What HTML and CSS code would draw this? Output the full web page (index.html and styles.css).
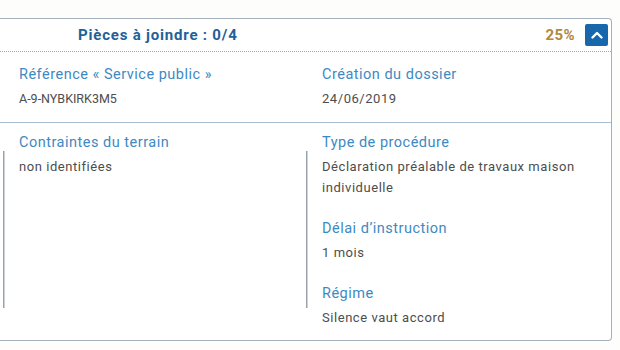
FILE: index.html
```html
<!DOCTYPE html>
<html lang="fr">
<head>
  <meta charset="UTF-8" />
  <title>Dossier</title>
  <link rel="stylesheet" href="styles.css">
</head>
<body>
  <div class="card">
    <div class="card-header">
      <span class="pieces">Pièces à joindre : 0/4</span>
      <span class="percent">25%</span>
      <button class="toggle-btn" title="Replier">
        <svg width="12" height="8" viewBox="0 0 12 8"><path d="M1.5 6.5 L6 2 L10.5 6.5" fill="none" stroke="#fff" stroke-width="2.4" stroke-linecap="round" stroke-linejoin="round"/></svg>
      </button>
    </div>

    <div class="row row-top">
      <div class="col">
        <div class="label">Référence « Service public »</div>
        <div class="value code">A-9-NYBKIRK3M5</div>
      </div>
      <div class="col">
        <div class="label">Création du dossier</div>
        <div class="value">24/06/2019</div>
      </div>
    </div>

    <div class="row row-bottom">
      <div class="col col-lined">
        <div class="label">Contraintes du terrain</div>
        <div class="value">non identifiées</div>
      </div>
      <div class="col col-lined">
        <div class="label">Type de procédure</div>
        <div class="value">Déclaration préalable de travaux maison individuelle</div>
        <div class="label spaced">Délai d’instruction</div>
        <div class="value">1 mois</div>
        <div class="label spaced">Régime</div>
        <div class="value">Silence vaut accord</div>
      </div>
    </div>
  </div>
</body>
</html>
```

FILE: styles.css
```css
* {
  box-sizing: border-box;
}

body {
  margin: 0;
  padding-top: 18px;
  background: #fdfdfb;
  font-family: Roboto, 'Liberation Sans', sans-serif;
}

.card {
  width: 612px;
  height: 323px;
  background: #fff;
  border: 1.5px solid #a3b0bb;
  border-left: none;
  border-radius: 0 4px 4px 0;
}

.card-header {
  display: flex;
  align-items: center;
  height: 33px;
  padding: 0 3px 0 78px;
  border-bottom: 1px dotted #a8a8a8;
}

.pieces {
  flex: 1;
  font-size: 15px;
  letter-spacing: 0.8px;
  font-weight: bold;
  color: #22609a;
}

.percent {
  font-size: 15px;
  letter-spacing: 0.4px;
  font-weight: bold;
  color: #b3883a;
  margin-right: 10px;
}

.toggle-btn {
  width: 23px;
  height: 22px;
  padding: 0;
  border: none;
  border-radius: 2px;
  background: #1866ac;
  display: flex;
  align-items: center;
  justify-content: center;
}

.row {
  display: grid;
  grid-template-columns: 303px 1fr;
}

.row-top {
  padding: 12px 0 13px;
  border-bottom: 1.5px solid #a9c0d3;
}

.row-bottom {
  padding: 9px 0 0;
}

.col {
  padding: 0 10px 0 19px;
}

.col-lined {
  background: linear-gradient(#98a3ad, #98a3ad) no-repeat left 3px top 19px / 1.5px 157px;
}

.label {
  font-size: 14.5px;
  letter-spacing: 0.5px;
  line-height: 20px;
  padding-top: 1px;
  color: #3e89c3;
}

.label.spaced {
  margin-top: 20px;
}

.value {
  font-size: 13px;
  letter-spacing: 0.55px;
  line-height: 21px;
  margin-top: 3px;
  color: #4d4d4d;
}

.value.code {
  font-size: 12.5px;
  letter-spacing: 0;
}
```
